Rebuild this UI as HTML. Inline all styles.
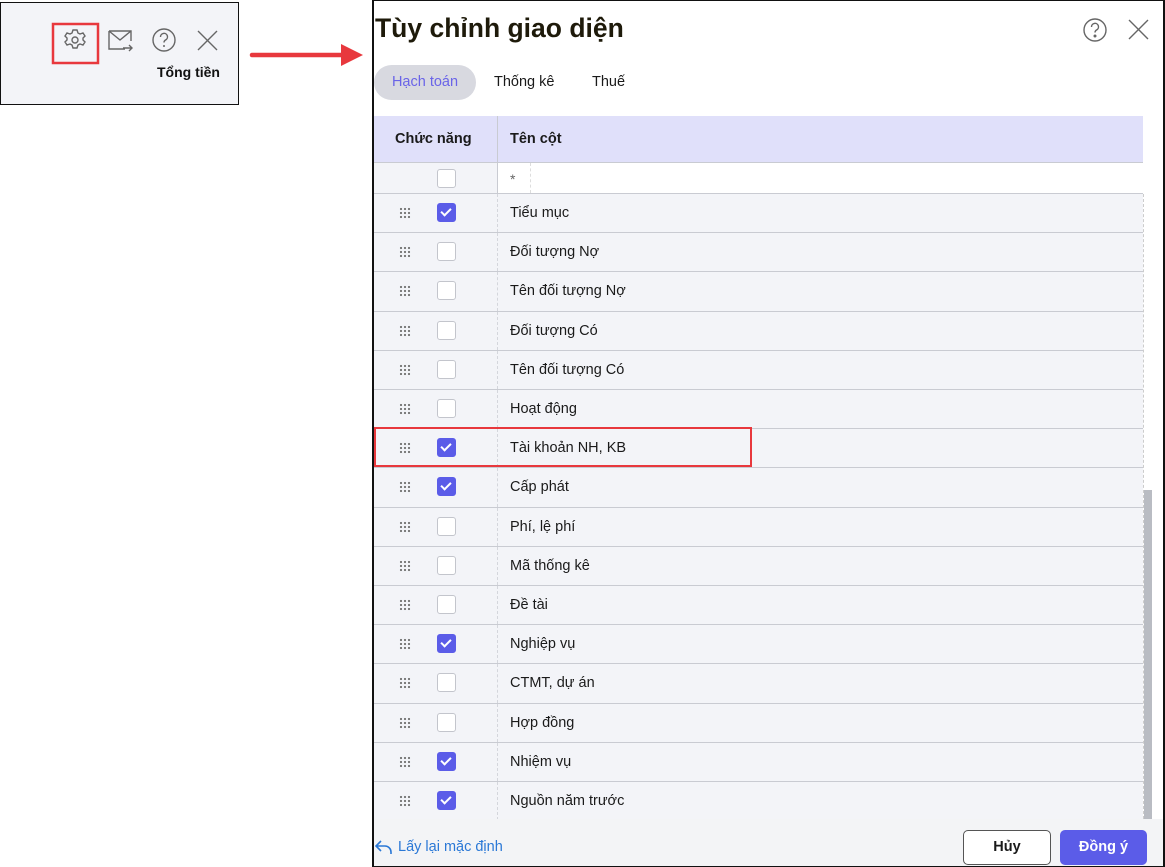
<!DOCTYPE html><html><head><meta charset="utf-8"><style>
*{box-sizing:border-box;margin:0;padding:0}
body{width:1165px;height:867px;background:#fff;position:relative;overflow:hidden;font-family:"Liberation Sans",sans-serif;color:#1a1a1a}
.lp{position:absolute;left:0;top:2px;width:239px;height:103px;background:#f3f4f8;border:1px solid #111}
.dlg{position:absolute;left:372px;top:0;width:793px;height:867px;border-left:2px solid #111;border-right:2px solid #111;border-bottom:2px solid #111;border-top:1px solid #111;background:#fff}
.ab{position:absolute}
.row{position:absolute;left:0;width:769px;height:39.2px;background:#f3f4f8;border-bottom:1.5px solid #c9cbd2;font-size:14.5px}
.row .t{position:absolute;left:136px;top:11px}
.row .dv{position:absolute;left:123px;top:0;bottom:0;border-left:1px dashed #d4d6dc}
.cb{position:absolute;left:63px;top:9px;width:19px;height:19px;border:1.5px solid #c3c5cc;border-radius:3px;background:#fff}
.cb.on{background:#5b5ce8;border-color:#5b5ce8}
.cb.on:after{content:"";position:absolute;left:5px;top:2px;width:4px;height:8px;border:solid #fff;border-width:0 2px 2px 0;transform:rotate(45deg)}
.dots{position:absolute;left:25px;top:13px;width:12px;height:12px;background-image:radial-gradient(circle,#777 1px,transparent 1.3px);background-size:4px 4px}
</style></head><body>
<div class="lp"></div>
<svg class="ab" style="left:0;top:0" width="372" height="110">
<rect x="53" y="24" width="45" height="39" fill="none" stroke="#e8383d" stroke-width="2.5"/>
<g fill="none" stroke="#666" stroke-width="1.4">
<path d="M73 30h4l1 3 2 1 3-1 2 3-2 2v2l2 2-2 3-3-1-2 1-1 3h-4l-1-3-2-1-3 1-2-3 2-2v-2l-2-2 2-3 3 1 2-1z"/><circle cx="75" cy="40" r="3"/>
<path d="M109 31h22v10M109 31v18h16M109 31l11 9 11-9M123 48h9m-3-3l3 3-3 3"/>
<circle cx="164" cy="40" r="11"/><path d="M160.5 37a3.5 3.5 0 1 1 5 3c-1 .6-1.5 1.2-1.5 2.5"/>
<path d="M198 31l19 19M217 31l-19 19"/></g>
<circle cx="164" cy="46" r="1" fill="#666"/>
<text x="157" y="77" font-size="14" font-weight="bold" fill="#111" font-family="Liberation Sans">Tổng tiền</text>
<path d="M252 55H342" stroke="#e8383d" stroke-width="4.5" stroke-linecap="round"/><path d="M341 44l22 11-22 11z" fill="#e8383d"/>
</svg>
<div class="dlg">
<div class="ab" style="left:1px;top:12px;font-size:26.5px;font-weight:bold;color:#1e1a0a">Tùy chỉnh giao diện</div>
<svg class="ab" style="left:704px;top:15px" width="80" height="30" fill="none" stroke="#666" stroke-width="1.4"><circle cx="17" cy="14" r="11"/><path d="M13.5 11a3.5 3.5 0 1 1 5 3c-1 .6-1.5 1.2-1.5 2.5"/><circle cx="17" cy="20" r=".8" fill="#666"/><path d="M51 4l19 19M70 4l-19 19"/></svg>
<div class="ab" style="left:0;top:64px;width:102px;height:35px;border-radius:18px;background:#d8d9e0;color:#6a64e8;font-size:14.5px;text-align:center;line-height:35px">Hạch toán</div>
<div class="ab" style="left:120px;top:73px;font-size:14.5px">Thống kê</div>
<div class="ab" style="left:218px;top:73px;font-size:14.5px">Thuế</div>
<div class="ab" style="left:0;top:115px;width:769px;height:47px;background:#e0e0fa;border-bottom:1.5px solid #c9cbd2;font-size:14.5px;font-weight:bold">
<div class="ab" style="left:21px;top:15px">Chức năng</div>
<div class="ab" style="left:123px;top:0;bottom:0;border-left:1px solid #c9cbd2"></div>
<div class="ab" style="left:136px;top:15px">Tên cột</div></div>
<div class="ab" style="left:0;top:162px;width:769px;height:31px;background:#f3f4f8;border-bottom:1.5px solid #c9cbd2">
<div class="cb" style="top:6px"></div>
<div class="ab" style="left:123px;top:0;bottom:0;right:0;background:#fff;border-left:1px solid #c9cbd2"><span class="ab" style="left:12px;top:8px;color:#666;font-size:14px">*</span><div class="ab" style="left:32px;top:0;bottom:0;border-left:1px dashed #ddd"></div></div></div>
<div id="rows"></div>
<div class="ab" style="left:769px;top:193px;width:1px;height:625px;border-left:1px dashed #ccc"></div>
<div class="ab" style="left:770px;top:489px;width:8px;height:330px;background:#b9bcc3"></div>
<div class="ab" style="left:0;top:818px;width:789px;height:47px;background:#f3f4f6"></div>
<svg class="ab" style="left:1px;top:838px" width="18" height="16" fill="none" stroke="#2a78d6" stroke-width="1.6"><path d="M6 2L1 7l5 5M1 7h9a6 6 0 0 1 6 6v2"/></svg>
<div class="ab" style="left:24px;top:838px;color:#2a78d6;font-size:14.5px">Lấy lại mặc định</div>
<div class="ab" style="left:589px;top:829px;width:88px;height:35px;border:1px solid #555;border-radius:5px;background:#fff;text-align:center;line-height:33px;font-weight:bold;font-size:14.5px">Hủy</div>
<div class="ab" style="left:686px;top:829px;width:87px;height:35px;border-radius:5px;background:#5b5ce8;color:#fff;text-align:center;line-height:35px;font-weight:bold;font-size:14.5px">Đồng ý</div>
<div class="ab" style="left:0;top:426px;width:378px;height:40px;border:2.5px solid #e8383d"></div>
</div>
<script>
var d=[["Tiểu mục",1],["Đối tượng Nợ",0],["Tên đối tượng Nợ",0],["Đối tượng Có",0],["Tên đối tượng Có",0],["Hoạt động",0],["Tài khoản NH, KB",1],["Cấp phát",1],["Phí, lệ phí",0],["Mã thống kê",0],["Đề tài",0],["Nghiệp vụ",1],["CTMT, dự án",0],["Hợp đồng",0],["Nhiệm vụ",1],["Nguồn năm trước",1]];
var h="";d.forEach(function(r,i){h+='<div class="row" style="top:'+(193+i*39.2)+'px"><div class="dots"></div><div class="cb'+(r[1]?' on':'')+'"></div><div class="dv"></div><div class="t">'+r[0]+'</div></div>'});
var e=document.getElementById("rows");e.outerHTML=h;
</script>
</body></html>
